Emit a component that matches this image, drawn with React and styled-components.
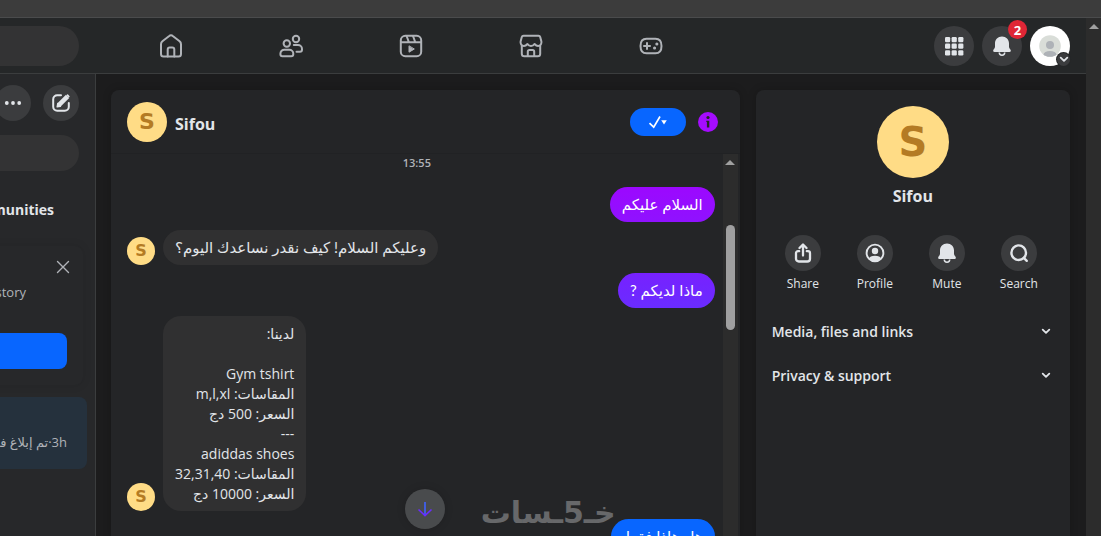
import React from "react";
import styled, { createGlobalStyle } from "styled-components";

const Global = createGlobalStyle`
  *, *::before, *::after { box-sizing: border-box; }
  body {
    margin: 0;
    background: #1c1c1d;
    color: #e2e5e9;
    font-family: "Open Sans", "Noto Sans", "DejaVu Sans", sans-serif;
    overflow: hidden;
  }
  button { font: inherit; color: inherit; border: 0; padding: 0; cursor: pointer; }
  h1, h2, p, ul { margin: 0; padding: 0; }
  ul { list-style: none; }
`;

const Shell = styled.div`
  display: flex;
  flex-direction: column;
  height: 100vh;
`;
const WindowBar = styled.div`
  flex: none;
  height: 18px;
  background: #3c3c3c;
  border-bottom: 1px solid #4a4b4c;
`;
const Viewport = styled.div`
  flex: 1;
  display: flex;
  min-height: 0;
`;
const Page = styled.div`
  flex: 1;
  min-width: 0;
  display: flex;
  flex-direction: column;
`;
const ScrollTrack = styled.div`
  flex: none;
  width: 15px;
  background: #2c2c2c;
  display: flex;
  flex-direction: column;
  align-items: center;
  padding-top: 6px;
`;
const ScrollArrow = styled.i`
  border: 5px solid transparent;
  border-top: 0;
  border-bottom-color: #a0a0a0;
`;
const ScrollThumb = styled.div`
  width: 9px;
  height: 105px;
  margin-top: 60px;
  border-radius: 5px;
  background: #9f9fa0;
`;

const Header = styled.header`
  flex: none;
  display: flex;
  align-items: center;
  height: 56px;
  padding-right: 16px;
  background: #252728;
  border-bottom: 1px solid #3b3d3e;
`;
const SearchField = styled.input`
  flex: none;
  width: ${(p) => p.$width}px;
  height: ${(p) => p.$height}px;
  border: 0;
  border-radius: 0 20px 20px 0;
  background: #333334;
  color: inherit;
  font: inherit;
`;
const Tabs = styled.nav`
  flex: 1;
  display: flex;
  gap: 8px;
  padding-left: 36px;
`;
const Tab = styled.a`
  display: grid;
  place-items: center;
  width: 112px;
  height: 48px;
  color: #b0b3b8;
`;
const Actions = styled.div`
  display: flex;
  gap: 8px;
`;
const RoundButton = styled.button`
  position: relative;
  display: grid;
  place-items: center;
  flex: none;
  width: ${(p) => p.$size || 36}px;
  height: ${(p) => p.$size || 36}px;
  border-radius: 50%;
  background: ${(p) => p.$bg || "#3b3c3e"};
  color: #e2e5e9;
`;
const Badge = styled.span`
  position: absolute;
  top: -6px;
  right: -5px;
  width: 19px;
  height: 19px;
  border-radius: 50%;
  background: #e02636;
  color: #fff;
  font-size: 13px;
  line-height: 20px;
  font-weight: 700;
`;
const AccountMark = styled.span`
  position: absolute;
  right: 0;
  bottom: 0;
  display: grid;
  place-items: center;
  width: 13px;
  height: 13px;
  border-radius: 50%;
  background: #3b3c3e;
  box-shadow: 0 0 0 1px #252728;
`;

const Body = styled.div`
  flex: 1;
  display: flex;
  min-height: 0;
`;
const Sidebar = styled.aside`
  flex: none;
  width: 96px;
  overflow: hidden;
  background: #27282a;
  border-right: 1px solid #3b3d3e;
  display: flex;
  flex-direction: column;
  align-items: flex-end;
`;
const SidebarTools = styled.div`
  display: flex;
  gap: 12px;
  padding: 11px 16px 14px 0;
`;
const SidebarSearch = styled.div`
  padding-right: 16px;
`;
const FilterTab = styled.button`
  margin: 20px 41px 0 0;
  height: 36px;
  background: none;
  font-size: 14px;
  font-weight: 700;
`;
const Notice = styled.section`
  width: 200px;
  margin: 19px 12px 12px 0;
  padding: 12px 16px 16px;
  border-radius: 8px;
  background: #27282a;
  box-shadow: 0 0 10px rgba(0, 0, 0, 0.1);
  display: flex;
  flex-direction: column;
  align-items: flex-end;
`;
const CloseButton = styled.button`
  height: 16px;
  margin-right: -4px;
  background: none;
  color: #b0b3b8;
`;
const NoticeText = styled.p`
  margin: 8px 41px 31px 0;
  font-size: 13px;
  line-height: 20px;
  color: #b0b3b8;
  white-space: nowrap;
`;
const PrimaryButton = styled.button`
  width: 160px;
  height: 36px;
  border-radius: 8px;
  background: #0866ff;
`;
const Thread = styled.a`
  flex: none;
  display: flex;
  align-items: flex-end;
  direction: rtl;
  width: 200px;
  height: 72px;
  margin-right: 8px;
  padding: 0 20px 17px;
  border-radius: 8px;
  background: #25313d;
  color: #b0b3b8;
  font-size: 13px;
  line-height: 20px;
  text-decoration: none;
`;

const Content = styled.main`
  flex: 1;
  min-width: 0;
  display: flex;
  gap: 16px;
  padding: 16px 16px 0 15px;
`;
const Panel = styled.section`
  position: relative;
  flex: ${(p) => p.$grow} 1 0;
  min-width: 0;
  min-height: 0;
  display: flex;
  flex-direction: column;
  border-radius: 8px 8px 0 0;
  background: #242527;
  box-shadow: 0 0 8px rgba(0, 0, 0, 0.2);
  overflow: hidden;
`;
const ChatHeader = styled.div`
  flex: none;
  display: flex;
  align-items: center;
  gap: 8px;
  height: 64px;
  padding: 0 22px 0 16px;
  border-bottom: 1px solid #212224;
`;
const Avatar = styled.span`
  flex: none;
  display: grid;
  place-items: center;
  width: ${(p) => p.$size}px;
  height: ${(p) => p.$size}px;
  border-radius: 50%;
  background: #ffdc86;
  color: #b47b24;
  font-family: "DejaVu Sans", sans-serif;
  font-weight: 700;
  font-size: ${(p) => p.$font}px;
  line-height: 1;
`;
const Name = styled.h1`
  flex: ${(p) => (p.$fill ? 1 : "none")};
  padding-top: ${(p) => (p.$fill ? 4 : 2)}px;
  font-size: 16px;
  line-height: 20px;
  font-weight: 700;
`;
const DoneButton = styled.button`
  display: flex;
  align-items: center;
  justify-content: center;
  width: 56px;
  height: 28px;
  margin-right: 4px;
  border-radius: 14px;
  background: #0866ff;
  color: #fff;
`;
const PlainButton = styled.button`
  display: grid;
  place-items: center;
  background: none;
`;
const ChatBody = styled.div`
  flex: 1;
  display: flex;
  min-height: 0;
  padding-right: 2px;
`;
const Messages = styled.div`
  flex: 1;
  min-width: 0;
  overflow: hidden;
  display: flex;
  flex-direction: column;
  gap: 8px;
  padding: 0 8px 0 16px;
`;
const Stamp = styled.time`
  align-self: center;
  margin: 0 8px 7px 0;
  font-size: 11px;
  line-height: 18px;
  font-weight: 600;
  color: #b0b3b8;
`;
const MessageRow = styled.div`
  flex: none;
  display: flex;
  align-items: flex-end;
  justify-content: ${(p) => (p.$own ? "flex-end" : "flex-start")};
  gap: 8px;
`;
const Bubble = styled.p`
  direction: rtl;
  padding: ${(p) => (p.$list ? "8px 12px 7px" : "7px 12px 8px")};
  border-radius: 18px;
  background: ${(p) => p.$bg || "#303031"};
  color: ${(p) => (p.$bg ? "#fff" : "#e2e5e9")};
  font-family: ${(p) => (p.$list ? '"Open Sans"' : "Lato")}, "DejaVu Sans", sans-serif;
  font-size: ${(p) => (p.$list ? 14 : 15)}px;
  line-height: 20px;
  white-space: pre-line;
`;
const JumpButton = styled(RoundButton)`
  position: absolute;
  left: 294px;
  bottom: 7px;
  box-shadow: 0 0 8px rgba(0, 0, 0, 0.15);
`;
const Watermark = styled.span`
  position: absolute;
  right: 124px;
  bottom: 0;
  direction: rtl;
  font-family: "DejaVu Sans", sans-serif;
  font-weight: 700;
  font-size: 30px;
  line-height: 46px;
  color: #67686a;
`;

const Profile = styled.div`
  display: flex;
  flex-direction: column;
  align-items: center;
  gap: 6px;
  padding: 16px 0 29px;
`;
const QuickActions = styled.ul`
  display: flex;
  justify-content: center;
  padding-right: 4px;
`;
const QuickAction = styled.li`
  width: 72px;
  display: flex;
  flex-direction: column;
  align-items: center;
  gap: 5px;
  font-size: 12px;
  line-height: 16px;
`;
const Sections = styled.div`
  padding-top: 17px;
`;
const SectionButton = styled.button`
  display: flex;
  align-items: center;
  justify-content: space-between;
  width: 100%;
  height: 44px;
  padding: 0 18px 0 16px;
  background: none;
  font-size: 14px;
  font-weight: 600;
`;

const Icon = ({ size = 24, box = 24, w = 2, children }) => (
  <svg width={size} height={size} viewBox={`0 0 ${box} ${box}`} fill="none" stroke="currentColor" strokeWidth={w} strokeLinecap="round" strokeLinejoin="round" aria-hidden="true">
    {children}
  </svg>
);

const HomeIcon = () => (
  <Icon w={2}>
    <path d="M2 10.200c0-1.200.5-2.200 1.400-2.900l6.500-5.100c1.200-1 3-1 4.200 0l6.500 5.100c.9.700 1.400 1.700 1.400 2.900V20c0 1.400-1.100 2.500-2.500 2.500h-15C3.100 22.500 2 21.400 2 20z" />
    <path d="M8.700 22.500V15.500c0-1.200.9-2 2-2h2.600c1.100 0 2 .8 2 2v7" />
  </Icon>
);
const FriendsIcon = () => (
  <Icon w={2}>
    <circle cx="7.800" cy="9.500" r="3.200" />
    <circle cx="17" cy="5" r="3.200" />
    <path d="M5.500 15.700h4.800a4 4 0 0 1 4 4v.4c0 1.200-.9 2.200-2.100 2.200H3.400c-1.200 0-2-1-2-2.200v-.4a4 4 0 0 1 4.100-4z" />
    <path d="M14.800 11h4.200a4 4 0 0 1 4 4v.6c0 1.200-.8 2.200-2 2.200h-3.500" />
  </Icon>
);
const ReelsIcon = () => (
  <Icon w={2}>
    <rect x="1.800" y="1.800" width="20.400" height="20.400" rx="4.500" />
    <path d="M2 8.300h20M7.600 2l2.200 6M14 2l2.200 6" />
    <path d="M10 12.200v6l5-3z" fill="currentColor" strokeWidth="1" />
  </Icon>
);
const StoreIcon = () => (
  <Icon w={2}>
    <path d="M4.500 1.800h15c.8 0 1.500.5 1.700 1.300l1.200 4.400c.4 2.500-1 4.500-3.300 4.500-1.700 0-2.700-1-3.600-2-.8 1.200-2 2-3.500 2s-2.700-.8-3.500-2c-.9 1-1.900 2-3.600 2-2.300 0-3.700-2-3.300-4.500l1.200-4.400c.2-.8.9-1.300 1.700-1.300z" />
    <path d="M2.800 12v7.800c0 1.400 1.100 2.500 2.500 2.500h13.400c1.400 0 2.500-1.100 2.500-2.500V12M8.800 22v-4.300c0-.9.7-1.600 1.600-1.600h3.200c.9 0 1.600.7 1.600 1.600V22" />
  </Icon>
);
const GamesIcon = () => (
  <Icon w={2}>
    <path d="M7.500 4.700h9c4 0 6 2.800 6 7.300s-2 7.300-6 7.300h-9c-4 0-6-2.800-6-7.300s2-7.300 6-7.300z" />
    <path d="M5 12h6M8 9v6" />
    <path d="M17.800 10h.1M15.500 14h.1" strokeWidth="3" />
  </Icon>
);
const GridIcon = () => (
  <svg width="20" height="20" viewBox="0 0 20 20" fill="currentColor" aria-hidden="true">
    {[1, 7.6, 14.2].map((y) => [1, 7.6, 14.2].map((x) => (
      <rect key={`${x}-${y}`} x={x} y={y} width="5.200" height="5.200" rx="1.200" />
    )))}
  </svg>
);
const BellIcon = ({ size = 20 }) => (
  <svg width={size} height={size} viewBox="0 0 20 20" fill="currentColor" aria-hidden="true">
    <path d="M10 .6c-4.100 0-7 3.200-7 7v3.200c0 .6-.2 1.100-.6 1.600l-.8 1.100c-.9 1.300-.4 2.500 1 2.500h14.800c1.400 0 1.900-1.200 1-2.500l-.8-1.100c-.4-.5-.6-1-.6-1.600V7.600c0-3.800-2.900-7-7-7z" />
    <path d="M7.300 16.500a2.700 2.700 0 0 0 5.400 0" fill="none" stroke="currentColor" strokeWidth="1.500" />
  </svg>
);
const PersonPicture = () => (
  <svg width="40" height="40" viewBox="0 0 40 40" aria-hidden="true">
    <defs><clipPath id="face"><circle cx="20" cy="20" r="10.800" /></clipPath></defs>
    <circle cx="20" cy="20" r="10.800" fill="#d9ddd8" />
    <g clipPath="url(#face)" fill="#aeb2b7">
      <circle cx="20" cy="19" r="4" />
      <ellipse cx="20" cy="28.500" rx="6.500" ry="3.600" />
    </g>
  </svg>
);
const ChevronIcon = ({ size = 12 }) => (
  <Icon size={size} box={12} w={1.8}><path d="M2.700 4.600 6 7.900l3.300-3.300" /></Icon>
);
const DotsIcon = () => (
  <svg width="20" height="20" viewBox="0 0 20 20" fill="currentColor" aria-hidden="true">
    <circle cx="3.800" cy="10" r="1.900" /><circle cx="10" cy="10" r="1.900" /><circle cx="16.200" cy="10" r="1.900" />
  </svg>
);
const ComposeIcon = () => (
  <Icon size={20} box={20} w={2}>
    <path d="M10 2.200H6.200a4 4 0 0 0-4 4v7.600a4 4 0 0 0 4 4h7.600a4 4 0 0 0 4-4V10" />
    <path d="M7.800 12.200 16.600 3.400" strokeWidth="4.600" strokeLinecap="butt" />
    <path d="M6.200 13.800l.6-3.200 2.600 2.600zM16.500 2.100l1.400 1.400" strokeWidth="1.500" fill="currentColor" />
  </Icon>
);
const CloseIcon = () => (
  <Icon size={16} box={16} w={1.4}><path d="M2.500 2.500l11 11M13.500 2.500l-11 11" /></Icon>
);
const DoneIcon = () => (
  <svg width="20" height="14" viewBox="0 0 20 14" aria-hidden="true">
    <path d="M1.500 8.200 5.700 12.200 12 1.500" fill="none" stroke="currentColor" strokeWidth="1.700" />
    <path d="M13.200 5.300h5.600L16 9.500z" fill="currentColor" />
  </svg>
);
const InfoIcon = () => (
  <svg width="20" height="20" viewBox="0 0 20 20" aria-hidden="true">
    <circle cx="10" cy="10" r="10" fill="#a50cff" />
    <circle cx="10" cy="5.500" r="1.600" fill="#242527" />
    <path d="M8.300 8.700h3v6.800h-2.400V10h-.6z" fill="#242527" />
  </svg>
);
const ArrowDownIcon = () => (
  <svg width="18" height="18" viewBox="0 0 18 18" fill="none" strokeWidth="1.600" aria-hidden="true">
    <path d="M9 2v13" stroke="#3f62ff" />
    <path d="M2.500 9.500 9 15.700l6.500-6.200" stroke="#6a2cff" />
  </svg>
);
const ShareIcon = () => (
  <Icon size={20} box={20} w={2.3}>
    <path d="M6.200 8.200H5a2 2 0 0 0-2 2v5.500a2.800 2.800 0 0 0 2.800 2.800h8.400a2.800 2.800 0 0 0 2.800-2.800v-5.500a2 2 0 0 0-2-2h-1.200M10 12.500V2M6.500 5 10 1.500 13.500 5" />
  </Icon>
);
const ProfileIcon = () => (
  <Icon size={20} box={20} w={1.9}>
    <circle cx="10" cy="10" r="8.400" />
    <circle cx="10" cy="8" r="3.200" fill="currentColor" stroke="none" />
    <path d="M4 15.500c.8-2 2.400-2.800 6-2.800s5.200.8 6 2.800c-1.500 1.800-3.500 2.700-6 2.700s-4.500-.9-6-2.700z" fill="currentColor" stroke="none" />
  </Icon>
);
const SearchIcon = () => (
  <Icon size={20} box={20} w={2.4}><circle cx="9.700" cy="9.700" r="7.300" /><path d="M14.800 14.800 17.800 17.800" /></Icon>
);

const TABS = [
  ["Home", HomeIcon],
  ["Friends", FriendsIcon],
  ["Reels", ReelsIcon],
  ["Marketplace", StoreIcon],
  ["Gaming", GamesIcon],
];
const QUICK_ACTIONS = [
  ["Share", ShareIcon],
  ["Profile", ProfileIcon],
  ["Mute", BellIcon],
  ["Search", SearchIcon],
];
const MESSAGES = [
  { own: true, bg: "linear-gradient(#9c08ff, #8f12ff)", text: "السلام عليكم" },
  { text: "وعليكم السلام! كيف نقدر نساعدك اليوم؟" },
  { own: true, bg: "linear-gradient(#7721ff, #6a2cff)", text: "ماذا لديكم ?" },
  { list: true, text: "لدينا:\n\nGym tshirt\nالمقاسات: m,l,xl\nالسعر: 500 دج\n---\nadiddas shoes\nالمقاسات: 32,31,40\nالسعر: 10000 دج" },
  { own: true, bg: "#0866ff", text: "هل هاذا فقط" },
];

export default function App() {
  return (
    <Shell>
      <Global />
      <WindowBar />
      <Viewport>
        <Page>
          <Header>
            <SearchField type="search" aria-label="Search" $width={79} $height={40} />
            <Tabs>
              {TABS.map(([label, Glyph]) => (
                <Tab key={label} href="#" aria-label={label}><Glyph /></Tab>
              ))}
            </Tabs>
            <Actions>
              <RoundButton $size={40} aria-label="Menu"><GridIcon /></RoundButton>
              <RoundButton $size={40} aria-label="Notifications"><BellIcon /><Badge>2</Badge></RoundButton>
              <RoundButton $size={40} $bg="#fff" aria-label="Account">
                <PersonPicture />
                <AccountMark><ChevronIcon size={12} /></AccountMark>
              </RoundButton>
            </Actions>
          </Header>
          <Body>
            <Sidebar>
              <SidebarTools>
                <RoundButton aria-label="More"><DotsIcon /></RoundButton>
                <RoundButton aria-label="New message"><ComposeIcon /></RoundButton>
              </SidebarTools>
              <SidebarSearch>
                <SearchField type="search" aria-label="Search chats" $width={79} $height={36} />
              </SidebarSearch>
              <FilterTab>Communities</FilterTab>
              <Notice>
                <CloseButton aria-label="Close"><CloseIcon /></CloseButton>
                <NoticeText>history</NoticeText>
                <PrimaryButton aria-label="Continue" />
              </Notice>
              <Thread href="#">3h·تم إبلاغ في</Thread>
            </Sidebar>
            <Content>
              <Panel $grow={2}>
                <ChatHeader>
                  <Avatar $size={40} $font={22}>S</Avatar>
                  <Name $fill>Sifou</Name>
                  <DoneButton aria-label="Mark as done"><DoneIcon /></DoneButton>
                  <PlainButton aria-label="Conversation information"><InfoIcon /></PlainButton>
                </ChatHeader>
                <ChatBody>
                  <Messages>
                    <Stamp>13:55</Stamp>
                    {MESSAGES.map((m) => (
                      <MessageRow key={m.text} $own={m.own}>
                        {!m.own && <Avatar $size={28} $font={16}>S</Avatar>}
                        <Bubble $bg={m.bg} $list={m.list}>{m.text}</Bubble>
                      </MessageRow>
                    ))}
                  </Messages>
                  <ScrollTrack>
                    <ScrollArrow />
                    <ScrollThumb />
                  </ScrollTrack>
                </ChatBody>
                <Watermark>خـ5ـسات</Watermark>
                <JumpButton $size={40} $bg="#494b4d" aria-label="Jump to latest"><ArrowDownIcon /></JumpButton>
              </Panel>
              <Panel $grow={1}>
                <Profile>
                  <Avatar $size={72} $font={40}>S</Avatar>
                  <Name as="h2">Sifou</Name>
                </Profile>
                <QuickActions>
                  {QUICK_ACTIONS.map(([label, Glyph]) => (
                    <QuickAction key={label}>
                      <RoundButton aria-labelledby={`action-${label}`}><Glyph /></RoundButton>
                      <span id={`action-${label}`}>{label}</span>
                    </QuickAction>
                  ))}
                </QuickActions>
                <Sections>
                  <SectionButton>Media, files and links<ChevronIcon /></SectionButton>
                  <SectionButton>Privacy &amp; support<ChevronIcon /></SectionButton>
                </Sections>
              </Panel>
            </Content>
          </Body>
        </Page>
        <ScrollTrack><ScrollArrow /></ScrollTrack>
      </Viewport>
    </Shell>
  );
}
